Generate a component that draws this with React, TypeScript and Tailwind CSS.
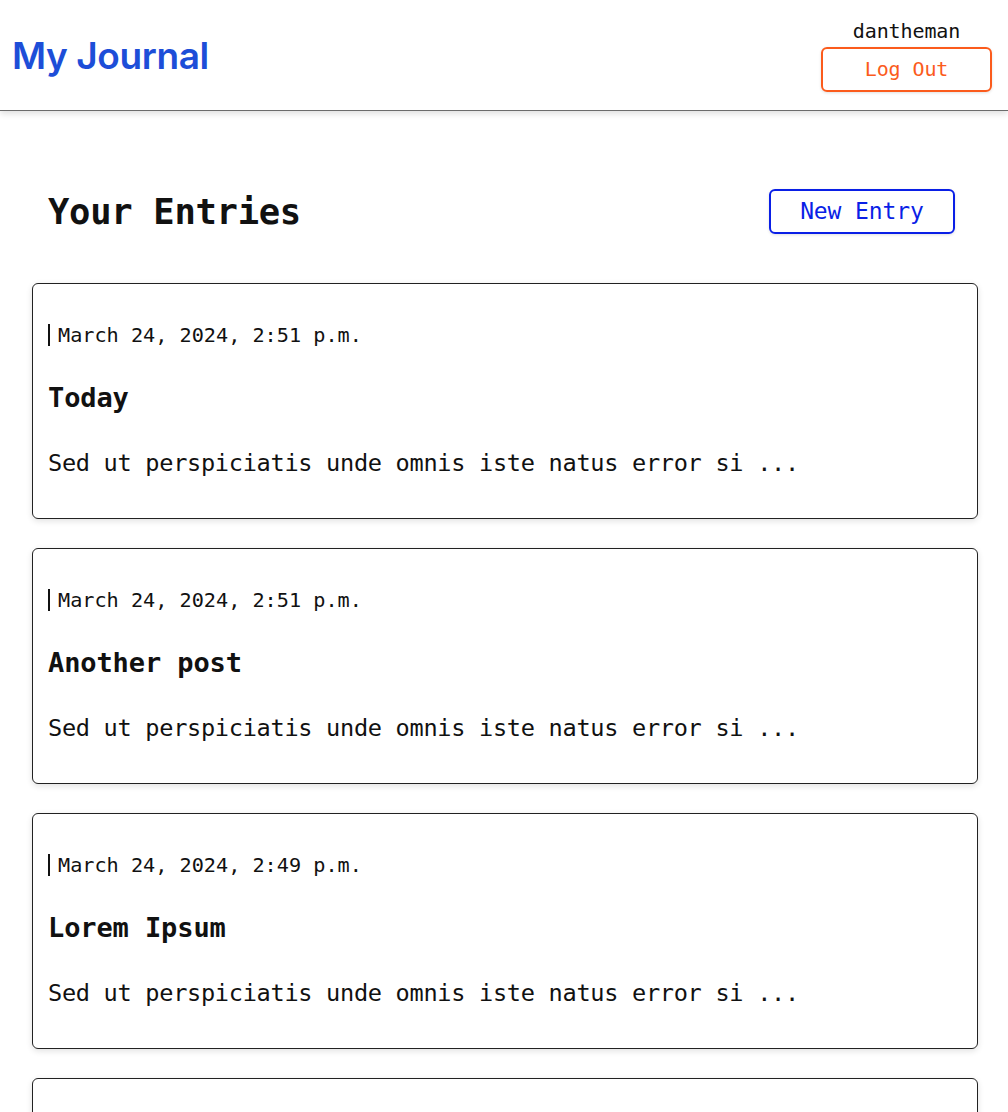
import React from "react";

const entries = [
  { date: "March 24, 2024, 2:51 p.m.", title: "Today" },
  { date: "March 24, 2024, 2:51 p.m.", title: "Another post" },
  { date: "March 24, 2024, 2:49 p.m.", title: "Lorem Ipsum" },
  { date: "March 24, 2024, 2:45 p.m.", title: "First entry" },
];

const mono = "font-['DejaVu_Sans_Mono','Liberation_Mono',monospace]";

export default function App() {
  return (
    <div className={`min-h-screen bg-white text-[#111] ${mono}`}>
      <header className="h-[111px] border-b border-[#6b6b6b] shadow-[0_3px_6px_rgba(0,0,0,0.12)] flex items-center justify-between pl-3 pr-4">
        <div className="font-['Inter','Noto_Sans',sans-serif] font-semibold text-[37px] leading-none text-[#1d4ed8] tracking-[-0.4px]">
          My Journal
        </div>
        <div className="flex flex-col items-center gap-1">
          <div className="text-[20px] leading-6 tracking-[-0.1px]">dantheman</div>
          <button className="w-[171px] h-[45px] rounded-md border-2 border-[#fb5b1c] text-[#fb5b1c] text-[20px] shadow-[0_1px_3px_rgba(0,0,0,0.12)] tracking-[-0.1px]">
            Log Out
          </button>
        </div>
      </header>
      <main className="px-8 pt-[78px]">
        <div className="flex items-center justify-between pl-4 pr-[21px]">
          <h1 className="text-[35.5px] font-bold leading-none tracking-[-0.3px]">Your Entries</h1>
          <button className="w-[186px] h-[45px] rounded-md border-2 border-[#0a1fe6] text-[#0a1fe6] text-[23px] shadow-[0_1px_3px_rgba(0,0,0,0.12)] tracking-[-0.1px]">
            New Entry
          </button>
        </div>
        <div className="mt-[49px] flex flex-col gap-[29px] w-[946px]">
          {entries.map((e, i) => (
            <div
              key={i}
              className="rounded-md border border-[#222] shadow-[0_2px_6px_rgba(0,0,0,0.12)] pl-[15px] pr-4 pt-10 pb-[41px]"
            >
              <div className="border-l-2 border-[#111] pl-2 text-[20.2px] leading-[22px]">
                {e.date}
              </div>
              <h2 className="mt-[36px] text-[27px] font-bold leading-8 tracking-[-0.1px]">{e.title}</h2>
              <p className="mt-[35px] text-[23.6px] leading-7 tracking-[-0.3px]">
                Sed ut perspiciatis unde omnis iste natus error si ...
              </p>
            </div>
          ))}
        </div>
      </main>
    </div>
  );
}
